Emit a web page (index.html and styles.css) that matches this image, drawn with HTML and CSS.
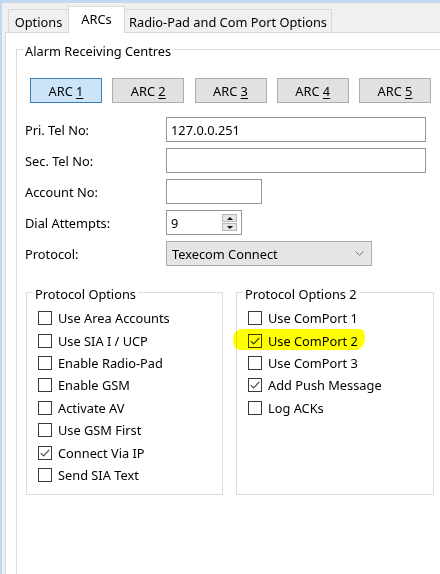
FILE: index.html
```html
<!DOCTYPE html>
<html>
<head>
<meta charset="utf-8">
<title>ARCs</title>
<link rel="stylesheet" href="styles.css">
</head>
<body>
<div class="window">
  <div class="tabs">
    <div class="tab tab-options">Options</div>
    <div class="tab tab-active tab-arcs">ARCs</div>
    <div class="tab tab-radio">Radio-Pad and Com Port Options</div>
  </div>
  <div class="panel">
    <fieldset class="group group-arc">
      <legend>Alarm Receiving Centres</legend>

      <div class="arc-buttons">
        <div class="btn btn-selected"><span>ARC <u>1</u></span></div>
        <div class="btn"><span>ARC <u>2</u></span></div>
        <div class="btn"><span>ARC <u>3</u></span></div>
        <div class="btn"><span>ARC <u>4</u></span></div>
        <div class="btn"><span>ARC <u>5</u></span></div>
      </div>

      <div class="form">
        <div class="row">
          <span class="label">Pri. Tel No:</span>
          <div class="field w-long">127.0.0.251</div>
        </div>
        <div class="row">
          <span class="label">Sec. Tel No:</span>
          <div class="field w-long"></div>
        </div>
        <div class="row">
          <span class="label">Account No:</span>
          <div class="field w-account"></div>
        </div>
        <div class="row">
          <span class="label">Dial Attempts:</span>
          <div class="field w-spin">
            <span>9</span>
            <div class="spin">
              <div class="spin-btn"><span class="tri-up"></span></div>
              <div class="spin-btn"><span class="tri-down"></span></div>
            </div>
          </div>
        </div>
        <div class="row">
          <span class="label">Protocol:</span>
          <div class="combo">
            <span>Texecom Connect</span>
            <svg class="chevron" width="9" height="5" viewBox="0 0 9 5"><polyline points="0.5,0.5 4.5,4.3 8.5,0.5" fill="none" stroke="#777" stroke-width="1"/></svg>
          </div>
        </div>
      </div>

      <div class="option-groups">
        <fieldset class="group group-opt group-opt1">
          <legend>Protocol Options</legend>
          <div class="check"><span class="box"></span>Use Area Accounts</div>
          <div class="check"><span class="box"></span>Use SIA I / UCP</div>
          <div class="check"><span class="box"></span>Enable Radio-Pad</div>
          <div class="check"><span class="box"></span>Enable GSM</div>
          <div class="check"><span class="box"></span>Activate AV</div>
          <div class="check"><span class="box"></span>Use GSM First</div>
          <div class="check"><span class="box"><svg width="12" height="12" viewBox="0 0 12 12"><polyline points="1.8,6.2 4.6,9 10.2,2.8" fill="none" stroke="#4a4a4a" stroke-width="1.2"/></svg></span>Connect Via IP</div>
          <div class="check"><span class="box"></span>Send SIA Text</div>
        </fieldset>
        <fieldset class="group group-opt group-opt2">
          <legend>Protocol Options 2</legend>
          <div class="check"><span class="box"></span>Use ComPort 1</div>
          <div class="check check-marked"><span class="marker"></span><span class="box"><svg width="12" height="12" viewBox="0 0 12 12"><polyline points="1.8,6.2 4.6,9 10.2,2.8" fill="none" stroke="#333" stroke-width="1.2"/></svg></span>Use ComPort 2</div>
          <div class="check"><span class="box"></span>Use ComPort 3</div>
          <div class="check"><span class="box"><svg width="12" height="12" viewBox="0 0 12 12"><polyline points="1.8,6.2 4.6,9 10.2,2.8" fill="none" stroke="#4a4a4a" stroke-width="1.2"/></svg></span>Add Push Message</div>
          <div class="check"><span class="box"></span>Log ACKs</div>
        </fieldset>
      </div>
    </fieldset>
  </div>
</div>
</body>
</html>
```
FILE: styles.css
```css
html, body {
  margin: 0;
  padding: 0;
}

body {
  width: 440px;
  height: 574px;
  overflow: hidden;
  background: #f0f0f0;
  font-family: "Noto Sans", "Open Sans", sans-serif;
  font-size: 12.8px;
  color: #000;
}

.window {
  height: 574px;
  box-sizing: border-box;
  border-top: 3px solid #c2d8ef;
  border-left: 2px solid #c2d8ef;
  display: flex;
  flex-direction: column;
}

/* tab strip */
.tabs {
  display: flex;
  align-items: flex-end;
  height: 29px;
  padding-left: 6px;
  position: relative;
  z-index: 1;
  flex: none;
}

.tab {
  box-sizing: border-box;
  height: 23px;
  border: 1px solid #d9d9d9;
  border-bottom: none;
  background: #f0f0f0;
  display: flex;
  align-items: center;
  justify-content: center;
  padding-top: 2px;
  white-space: nowrap;
}

.tab + .tab {
  margin-left: -1px;
}

.tab-options { width: 61px; }
.tab-arcs { width: 57px; }
.tab-radio { width: 208px; }

.tab-active {
  height: 27px;
  margin-bottom: -1px;
  background: #fff;
  padding-top: 0;
  padding-bottom: 3px;
  position: relative;
  z-index: 2;
}

/* tab page */
.panel {
  flex: 1;
  margin-left: 3px;
  background: #fff;
  border-top: 1px solid #d9d9d9;
  border-left: 1px solid #d9d9d9;
  overflow: hidden;
}

.group {
  margin: 0;
  padding: 0;
  border: 1px solid #dcdcdc;
  min-width: 0;
}

/* the caption sits a little below the frame line */
.group legend {
  margin-left: 6px;
  padding: 4px 2px 0;
  line-height: 16px;
}

.group-arc {
  margin: 6px 0 0 10px;
  width: 500px;
  height: 600px;
  box-sizing: border-box;
}

/* ARC selector buttons */
.arc-buttons {
  display: flex;
  gap: 10.25px;
  margin: 19px 0 0 13px;
}

.btn {
  box-sizing: border-box;
  width: 72px;
  height: 25px;
  border: 1px solid #adadad;
  background: #e1e1e1;
  display: flex;
  align-items: center;
  justify-content: center;
  white-space: pre;
}

.btn-selected {
  background: #cce4f7;
  border-color: #3b7fb9;
}

.btn u {
  text-underline-offset: 2px;
}

/* field rows */
.form {
  display: flex;
  flex-direction: column;
  gap: 6px;
  margin-top: 14px;
}

.row {
  display: flex;
  align-items: center;
  height: 25px;
}

.label {
  flex: none;
  width: 141px;
  margin-left: 8px;
}

.field {
  box-sizing: border-box;
  height: 25px;
  border: 1px solid #959595;
  background: #fff;
  padding: 0 4px;
  display: flex;
  align-items: center;
}

.w-long { width: 260px; }
.w-account { width: 96px; }
.w-spin { width: 76px; padding-right: 4px; }

.spin {
  margin-left: auto;
  display: flex;
  flex-direction: column;
  gap: 1px;
}

.spin-btn {
  box-sizing: border-box;
  width: 15px;
  height: 8px;
  border: 1px solid #b8b8b8;
  background: #e6e6e6;
  display: flex;
  align-items: center;
  justify-content: center;
}

.tri-up,
.tri-down {
  width: 0;
  height: 0;
  border-left: 3.5px solid transparent;
  border-right: 3.5px solid transparent;
}

.tri-up { border-bottom: 3.5px solid #111; }
.tri-down { border-top: 3.5px solid #111; }

.combo {
  box-sizing: border-box;
  width: 206px;
  height: 25px;
  border: 1px solid #acacac;
  background: #e5e5e5;
  padding: 0 7px 0 5px;
  display: flex;
  align-items: center;
  justify-content: space-between;
}

.chevron {
  display: block;
}

/* protocol option groups */
.option-groups {
  display: flex;
  gap: 13px;
  margin: 16px 0 0 9px;
  align-items: stretch;
}

.group-opt {
  box-sizing: border-box;
  padding: 5px 0 8px 0;
}

.group-opt1 { width: 197px; }
.group-opt2 { width: 198px; }

.check {
  display: flex;
  align-items: center;
  height: 22.4px;
  margin-left: 11px;
  white-space: nowrap;
}

.box {
  flex: none;
  box-sizing: border-box;
  width: 14px;
  height: 14px;
  border: 1px solid #3a3a3a;
  background: #fff;
  margin-right: 6px;
  display: flex;
  align-items: center;
  justify-content: center;
}

.box svg {
  display: block;
}

/* yellow highlighter stroke across a row */
.check-marked {
  position: relative;
}

.marker {
  position: absolute;
  left: -15px;
  top: 0;
  width: 132px;
  height: 21px;
  background: #ffff00;
  border-radius: 9px 5px 10px 7px / 10px 8px 11px 9px;
  mix-blend-mode: multiply;
  filter: blur(0.5px);
  z-index: 3;
}
```
